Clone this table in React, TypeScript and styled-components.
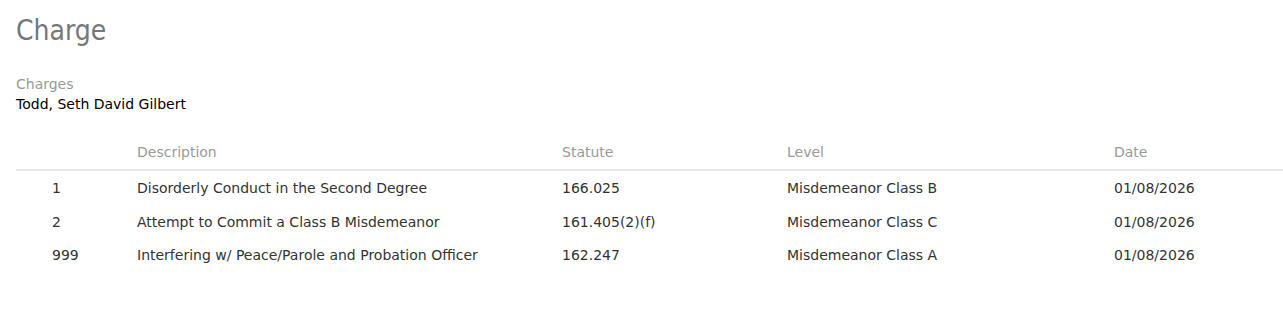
import React from "react";
import styled, { createGlobalStyle } from "styled-components";

const Global = createGlobalStyle`
  html, body { margin: 0; padding: 0; background: #fff; }
  body { font-family: "DejaVu Sans", Verdana, sans-serif; }
`;

const Page = styled.div`
  padding: 14px 0 0 16px;
`;

const Title = styled.h1`
  margin: 0;
  font-family: "DejaVu Sans Condensed", "DejaVu Sans", sans-serif;
  font-size: 28px;
  font-weight: normal;
  color: #777;
  line-height: 34px;
`;

const Label = styled.div`
  margin-top: 26px;
  font-size: 14px;
  color: #999;
  line-height: 20px;
`;

const Name = styled.div`
  font-size: 14px;
  color: #000;
  line-height: 20px;
`;

const Table = styled.div`
  margin-top: 18px;
  display: grid;
  grid-template-columns: 121px 425px 225px 327px 1fr;
`;

const HeadCell = styled.div`
  font-size: 14px;
  color: #999;
  line-height: 20px;
  padding: 10px 0 7px;
  border-bottom: 2px solid #e8e8e8;
`;

const Cell = styled.div<{ $pl?: number }>`
  font-size: 14px;
  color: #333;
  line-height: 20px;
  padding: 7px 0 6.5px ${(p) => p.$pl ?? 0}px;
`;

const rows = [
  ["1", "Disorderly Conduct in the Second Degree", "166.025", "Misdemeanor Class B", "01/08/2026"],
  ["2", "Attempt to Commit a Class B Misdemeanor", "161.405(2)(f)", "Misdemeanor Class C", "01/08/2026"],
  ["999", "Interfering w/ Peace/Parole and Probation Officer", "162.247", "Misdemeanor Class A", "01/08/2026"],
];

export default function App() {
  return (
    <Page>
      <Global />
      <Title>Charge</Title>
      <Label>Charges</Label>
      <Name>Todd, Seth David Gilbert</Name>
      <Table>
        <HeadCell />
        <HeadCell>Description</HeadCell>
        <HeadCell>Statute</HeadCell>
        <HeadCell>Level</HeadCell>
        <HeadCell>Date</HeadCell>
        {rows.map((r) =>
          r.map((c, i) => (
            <Cell key={r[0] + i} $pl={i === 0 ? 36 : 0}>
              {c}
            </Cell>
          ))
        )}
      </Table>
    </Page>
  );
}
